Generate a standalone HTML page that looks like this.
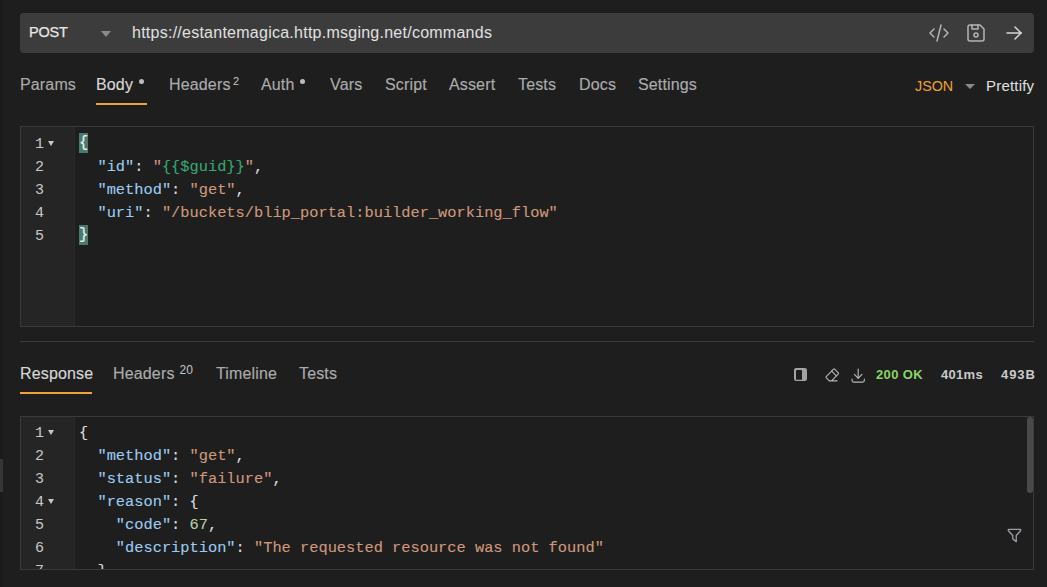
<!DOCTYPE html>
<html><head><meta charset="utf-8">
<style>
*{margin:0;padding:0;box-sizing:border-box}
html,body{width:1047px;height:587px;overflow:hidden;background:#1e1e1e;font-family:"Liberation Sans",sans-serif;position:relative}
.abs{position:absolute;white-space:nowrap}
.edge{position:absolute;left:0;top:0;width:3px;height:587px;background:#1b1b1b}
.urlbar{position:absolute;left:20px;top:13px;width:1014px;height:40px;background:#3c3c3c;border-radius:4px}
.tab{position:absolute;top:75px;font-size:16px;color:#ababab;line-height:20px;letter-spacing:0.15px;-webkit-text-stroke:0.15px}
.tab.active{color:#d6d6d6}
.sup{position:absolute;font-size:11px;color:#a6a6a6}
.dot{position:absolute;width:5px;height:5px;border-radius:50%;background:#bdbdbd}
.uline{position:absolute;height:2px;background:#f0a235}
.editor{position:absolute;left:20px;width:1014px;border:1px solid #3a3a3a;background:#1e1e1e;overflow:hidden}
.gutter{position:absolute;left:0;top:0;bottom:0;width:54px;background:#252525;border-right:1px solid #2a2a2a}
.ln{position:absolute;left:14px;font-family:"Liberation Mono",monospace;font-size:15px;color:#c8c8c8;line-height:23px}
.code{position:absolute;left:58px;font-family:"Liberation Mono",monospace;font-size:15.35px;color:#dcdcdc;line-height:23px;white-space:pre;-webkit-text-stroke:0.12px}
.br{display:inline-block;color:#e8f4f0;transform:translateY(-1px) scaleY(1.12)}
.k{color:#9ccbee}.s{color:#cf987c}.v{color:#36a872}.n{color:#b5cea8}
.fold{position:absolute;width:0;height:0;border-left:3px solid transparent;border-right:3px solid transparent;border-top:5px solid #c8c8c8}
.stat{position:absolute;top:366px;font-size:13px;font-weight:bold;line-height:17px}
</style></head><body>
<div class="edge"></div>
<div class="urlbar"></div>
<div class="abs" style="left:29px;top:22.7px;font-size:14.5px;letter-spacing:-0.2px;-webkit-text-stroke:0.25px;color:#e6e6e6;line-height:18px">POST</div>
<div class="abs" style="left:101px;top:31px;width:0;height:0;border-left:5px solid transparent;border-right:5px solid transparent;border-top:6px solid #8a8a8a"></div>
<div class="abs" style="left:132px;top:23px;font-size:16px;letter-spacing:0.25px;color:#e0e0e0;line-height:20px">https://estantemagica.http.msging.net/commands</div>
<!-- url icons -->
<svg class="abs" style="left:927px;top:21.2px" width="24" height="24" viewBox="0 0 24 24" fill="none" stroke="#b4b4b4" stroke-width="1.5" stroke-linecap="round" stroke-linejoin="round">
<path d="M7 8l-4 4l4 4"/><path d="M17 8l4 4l-4 4"/><path d="M14 4l-4 16"/></svg>
<svg class="abs" style="left:964px;top:21.2px" width="24" height="24" viewBox="0 0 24 24" fill="none" stroke="#b4b4b4" stroke-width="1.5" stroke-linecap="round" stroke-linejoin="round">
<path d="M6 4h10l4 4v10a2 2 0 0 1 -2 2h-12a2 2 0 0 1 -2 -2v-12a2 2 0 0 1 2 -2"/><path d="M12 14m-2 0a2 2 0 1 0 4 0a2 2 0 1 0 -4 0"/><path d="M14 4l0 4l-6 0l0 -4"/></svg>
<svg class="abs" style="left:1002px;top:20.5px" width="24" height="24" viewBox="0 0 24 24" fill="none" stroke="#d6d6d6" stroke-width="1.5" stroke-linecap="round" stroke-linejoin="round">
<path d="M5 12l14 0"/><path d="M13 18l6 -6"/><path d="M13 6l6 6"/></svg>
<!-- request tabs -->
<div class="tab" style="left:20px">Params</div>
<div class="tab active" style="left:96px">Body</div>
<div class="dot" style="left:139px;top:79px"></div>
<div class="uline" style="left:96px;top:103px;width:51px"></div>
<div class="tab" style="left:169px">Headers</div>
<div class="sup" style="left:233px;top:74.5px;color:#c4c4c4">2</div>
<div class="tab" style="left:261px">Auth</div>
<div class="dot" style="left:300px;top:79px"></div>
<div class="tab" style="left:330px">Vars</div>
<div class="tab" style="left:385px">Script</div>
<div class="tab" style="left:449px">Assert</div>
<div class="tab" style="left:518px">Tests</div>
<div class="tab" style="left:579px">Docs</div>
<div class="tab" style="left:638px">Settings</div>

<div class="abs" style="left:915px;top:77px;font-size:14.3px;color:#f0a235;line-height:18px">JSON</div>
<div class="abs" style="left:965px;top:84px;width:0;height:0;border-left:5px solid transparent;border-right:5px solid transparent;border-top:5px solid #8a8a8a"></div>
<div class="abs" style="left:986px;top:77px;font-size:15px;letter-spacing:0.2px;color:#e0e0e0;line-height:18px">Prettify</div>

<!-- request editor -->
<div class="editor" style="top:126px;height:201px">
  <div class="gutter"></div>
  <div class="ln" style="top:6px">1<br>2<br>3<br>4<br>5</div>
  <div class="fold" style="left:27px;top:14px"></div>
  <div class="abs" style="left:58px;top:6px;width:9px;height:20px;background:#4a7a6e"></div>
  <div class="abs" style="left:58px;top:98px;width:9px;height:20px;background:#4a7a6e"></div>
  <div class="code" style="top:6px"><span class="br">{</span>
  <span class="k">"id"</span>: <span class="s">"</span><span class="v">{{$guid}}</span><span class="s">"</span>,
  <span class="k">"method"</span>: <span class="s">"get"</span>,
  <span class="k">"uri"</span>: <span class="s">"/buckets/blip_portal:builder_working_flow"</span>
<span class="br">}</span></div>
</div>

<div class="abs" style="left:20px;top:341px;width:1014px;height:1px;background:#3a3a3a"></div>

<!-- response tabs -->
<div class="tab active" style="left:20px;top:364px">Response</div>
<div class="uline" style="left:20px;top:392px;width:72px"></div>
<div class="tab" style="left:113px;top:364px">Headers</div>
<div class="sup" style="left:179.5px;top:363px;font-size:12px;color:#c4c4c4">20</div>
<div class="tab" style="left:216px;top:364px">Timeline</div>
<div class="tab" style="left:299px;top:364px">Tests</div>

<!-- status icons -->
<svg class="abs" style="left:794px;top:368px" width="13" height="13" viewBox="0 0 13 13">
<rect x="0" y="0" width="13" height="13" rx="2.2" fill="#a4a4a4"/><rect x="2" y="2" width="6" height="9.8" rx="0.4" fill="#1e1e1e"/></svg>
<svg class="abs" style="left:822.9px;top:366.3px" width="17.8" height="17.8" viewBox="0 0 24 24" fill="none" stroke="#b4b4b4" stroke-width="1.5" stroke-linecap="round" stroke-linejoin="round">
<path d="M19 20h-10.5l-4.21 -4.3a1 1 0 0 1 0 -1.41l10 -10a1 1 0 0 1 1.41 0l5 5a1 1 0 0 1 0 1.41l-9.2 9.3"/><path d="M18 13.3l-6.3 -6.3"/></svg>
<svg class="abs" style="left:848.5px;top:365.5px" width="18.4" height="18.4" viewBox="0 0 24 24" fill="none" stroke="#b4b4b4" stroke-width="1.5" stroke-linecap="round" stroke-linejoin="round">
<path d="M4 17v2a2 2 0 0 0 2 2h12a2 2 0 0 0 2 -2v-2"/><path d="M7 11l5 5l5 -5"/><path d="M12 4l0 12"/></svg>
<div class="stat" style="left:876px;color:#8bd468;letter-spacing:0.35px">200 OK</div>
<div class="stat" style="left:941px;color:#cacaca;letter-spacing:0.3px">401ms</div>
<div class="stat" style="left:1001px;color:#cacaca;letter-spacing:0.9px">493B</div>

<!-- response editor -->
<div class="editor" style="top:416px;height:154px">
  <div class="gutter"></div>
  <div class="ln" style="top:4.5px">1<br>2<br>3<br>4<br>5<br>6<br>7</div>
  <div class="fold" style="left:27px;top:13px"></div>
  <div class="fold" style="left:27px;top:82px"></div>
  <div class="code" style="top:4.5px">{
  <span class="k">"method"</span>: <span class="s">"get"</span>,
  <span class="k">"status"</span>: <span class="s">"failure"</span>,
  <span class="k">"reason"</span>: {
    <span class="k">"code"</span>: <span class="n">67</span>,
    <span class="k">"description"</span>: <span class="s">"The requested resource was not found"</span>
  }</div>
  <div class="abs" style="left:1006px;top:0;width:6px;height:76px;background:#4a4a4a;border-radius:3px"></div>
</div>
<svg class="abs" style="left:1004.3px;top:525.3px" width="21" height="21" viewBox="0 0 24 24" fill="none" stroke="#a09ca8" stroke-width="1.5" stroke-linecap="round" stroke-linejoin="round">
<path d="M5.5 5h13a1 1 0 0 1 .5 1.5l-5 5.5l0 7l-4 -3l0 -4l-5 -5.5a1 1 0 0 1 .5 -1.5"/></svg>
<div class="abs" style="left:0;top:459px;width:3px;height:33px;background:#36363a"></div>
</body></html>
